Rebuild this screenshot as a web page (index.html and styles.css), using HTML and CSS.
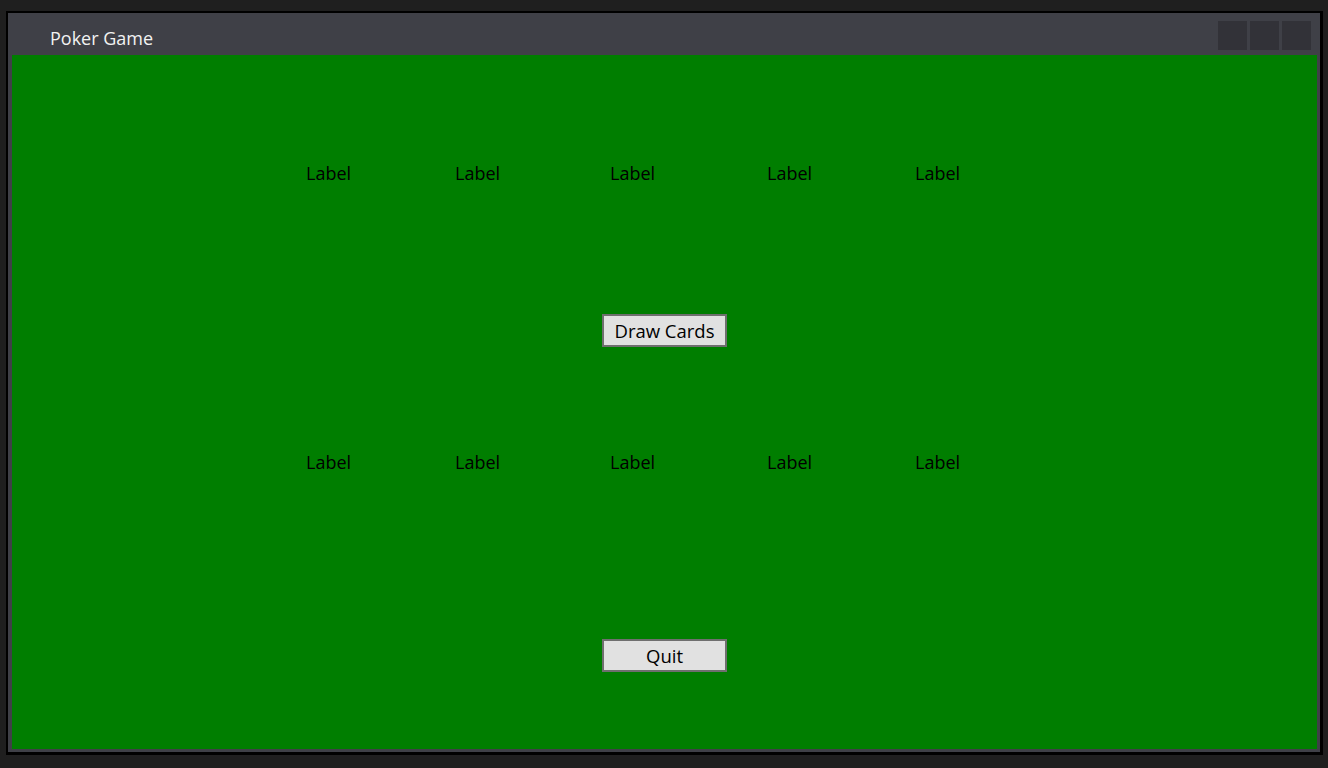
FILE: index.html
```html
<!DOCTYPE html>
<html>
<head>
<meta charset="utf-8">
<title>Poker Game</title>
<link rel="stylesheet" href="styles.css">
</head>
<body>
<div class="window">
  <div class="titlebar">
    <span class="title">Poker Game</span>
    <div class="controls">
      <span class="ctl"></span><span class="ctl"></span><span class="ctl"></span>
    </div>
  </div>
  <div class="content">
    <div class="labels row1">
      <span class="lbl">Label</span><span class="lbl">Label</span><span class="lbl">Label</span><span class="lbl">Label</span><span class="lbl">Label</span>
    </div>
    <button class="btn draw">Draw Cards</button>
    <div class="labels row2">
      <span class="lbl">Label</span><span class="lbl">Label</span><span class="lbl">Label</span><span class="lbl">Label</span><span class="lbl">Label</span>
    </div>
    <button class="btn quit">Quit</button>
  </div>
</div>
</body>
</html>
```
FILE: styles.css
```css
html, body {
  margin: 0;
  padding: 0;
  background: #1f1f1f;
  width: 1328px;
  height: 768px;
  overflow: hidden;
  font-family: "Open Sans", "Noto Sans", sans-serif;
}
.window {
  margin: 11px 0 0 6px;
  width: 1317px;
  height: 744px;
  box-sizing: border-box;
  border-style: solid;
  border-color: #000;
  border-width: 2px 3px 3px 2px;
  background: #3f4047;
  display: flex;
  flex-direction: column;
}
.titlebar {
  height: 42px;
  flex: none;
  display: flex;
  align-items: flex-start;
  justify-content: space-between;
  padding: 0 9px 0 42px;
}
.title {
  color: #f2f2f2;
  font-size: 18px;
  line-height: 24px;
  margin-top: 13px;
}
.controls {
  display: flex;
  gap: 3px;
  margin-top: 8px;
}
.ctl {
  width: 29px;
  height: 29px;
  background: #323238;
}
.content {
  flex: 1;
  margin: 0 3px 3px 4px;
  background: #007e00;
  display: flex;
  flex-direction: column;
}
.labels {
  display: grid;
  grid-template-columns: 149px 155px 157px 148px auto;
  padding-left: 294px;
  font-size: 18px;
  line-height: 24px;
  color: #000;
}
.row1 { margin-top: 106px; }
.row2 { margin-top: 103px; }
.btn {
  align-self: center;
  width: 125px;
  height: 33px;
  box-sizing: border-box;
  border: 2px solid #6f6f6f;
  background: #e1e1e1;
  font-family: "Open Sans", "Noto Sans", sans-serif;
  font-size: 18.5px;
  line-height: 24px;
  color: #000;
  padding: 0;
}
.draw { margin-top: 129px; }
.quit { margin-top: 165px; }
```
